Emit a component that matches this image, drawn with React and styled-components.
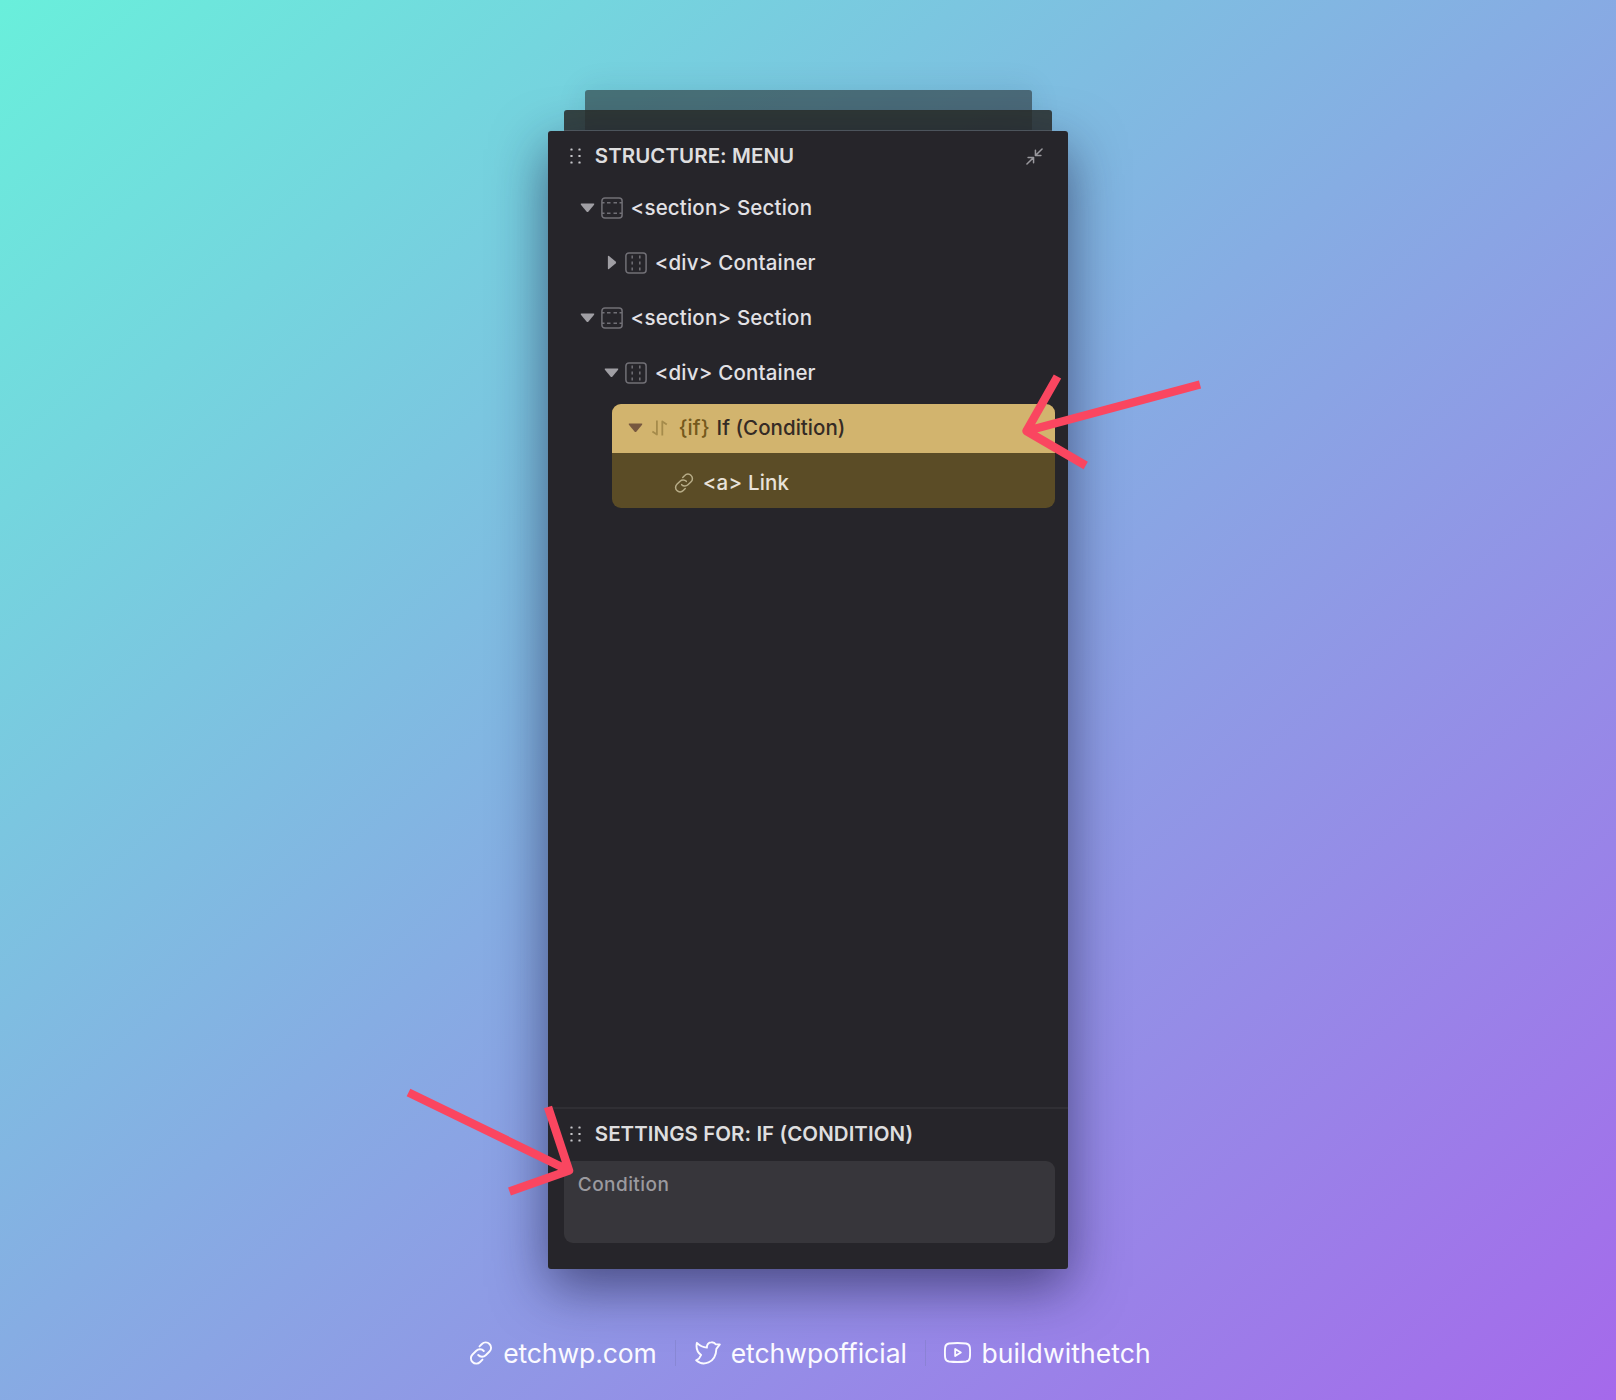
import React from 'react';
import styled, { createGlobalStyle } from 'styled-components';

const GlobalStyle = createGlobalStyle`
  * { box-sizing: border-box; }
  body { margin: 0; font-family: Inter, "Liberation Sans", sans-serif; }
  svg { display: block; flex: none; }
`;

const Page = styled.main`
  position: relative;
  display: flex;
  flex-direction: column;
  align-items: center;
  width: 1616px;
  height: 1400px;
  padding-top: 89.5px;
  overflow: hidden;
  background: linear-gradient(to bottom right, #69efdb 0%, #86ade3 48%, #a569eb 100%);
`;

const BackSheet = styled.div`
  width: 447px;
  height: 41.5px;
  margin-bottom: -21px;
  border-radius: 3px 3px 0 0;
  background: rgba(40, 48, 50, 0.6);
  box-shadow: 0 -2px 30px rgba(20, 50, 80, 0.1);
`;

const MiddleSheet = styled.div`
  width: 488.5px;
  height: 21px;
  border-radius: 3px 3px 0 0;
  border-bottom: 1px solid #50585b;
  background: rgba(42, 47, 44, 0.87);
`;

const Panel = styled.section`
  display: flex;
  flex-direction: column;
  width: 519.5px;
  height: 1137.5px;
  border-radius: 3px;
  background: #26252a;
  box-shadow: 0 18px 54px rgba(22, 22, 62, 0.6), 0 0 1px rgba(160, 180, 190, 0.8);
`;

const Heading = styled.header`
  display: flex;
  align-items: center;
  height: ${(p) => p.$height}px;
  padding: 1px 25px 0 21.5px;
`;

const Title = styled.h2`
  flex: 1;
  margin: 0 0 0 13px;
  font-size: 20.5px;
  font-weight: 600;
  line-height: 26px;
  letter-spacing: 0.06px;
  color: #dededf;
`;

const Tree = styled.div`
  display: flex;
  flex: 1;
  flex-direction: column;
`;

const Row = styled.div`
  display: flex;
  align-items: center;
  height: 55px;
  padding-left: ${(p) => 31.3 + p.$level * 24.1}px;
  color: #e2e1e5;
`;

const Caret = styled.span`
  display: flex;
  align-items: center;
  justify-content: center;
  width: 16px;
  margin-right: 5px;
  color: ${(p) => p.$color || '#a09fa4'};
`;

const RowIcon = styled.span`
  display: flex;
  align-items: center;
  justify-content: center;
  width: 22px;
  margin-right: 8px;
  color: ${(p) => p.$color || '#717076'};
`;

const Label = styled.span`
  font-size: 20.5px;
  font-weight: 500;
  line-height: 28px;
  letter-spacing: ${(p) => (p.$spacing === undefined ? 0.18 : p.$spacing)}px;
  white-space: pre;
`;

const Tag = styled.span`
  margin-right: 1.3px;
  color: ${(p) => p.$color || 'inherit'};
`;

const Selection = styled.div`
  margin: 4px 13px 0 63.5px;
  border-radius: 9px;
  overflow: hidden;
  background: #5b4c26;
`;

const SelectedRow = styled.div`
  display: flex;
  align-items: center;
  height: 48.5px;
  padding: 0 0 0.5px 15.8px;
  background: #d2b46e;
  color: #352b25;
`;

const LinkRow = styled.div`
  display: flex;
  align-items: center;
  height: 55px;
  padding: 6px 0 0 61px;
  color: #e8e2da;
`;

const Settings = styled.div`
  height: 162px;
  border-top: 2px solid #302f34;
`;

const Field = styled.div`
  height: 82px;
  margin: 2px 12.5px 0 15.5px;
  padding: 10px 14px;
  border-radius: 9px;
  background: #37363b;
`;

const FieldLabel = styled.span`
  font-size: 19px;
  font-weight: 500;
  line-height: 27px;
  letter-spacing: 0.45px;
  color: #9b9a9f;
`;

const Footer = styled.footer`
  display: flex;
  align-items: center;
  height: 40px;
  margin: 64px 0 0 4px;
  color: #fbfaff;
`;

const Social = styled.div`
  display: flex;
  align-items: center;
  gap: ${(p) => p.$gap}px;
  font-size: 26.5px;
  line-height: 34px;
  letter-spacing: ${(p) => p.$spacing}px;
`;

const Divider = styled.span`
  width: 1px;
  height: 26px;
  margin: 0 ${(p) => p.$after}px 0 ${(p) => p.$before}px;
  background: rgba(125, 125, 190, 0.45);
`;

const Arrows = styled.svg`
  position: absolute;
  inset: 0;
  pointer-events: none;
`;

const Grip = () => (
  <svg width="12" height="16" viewBox="0 0 12 16" fill="#c5c5c9">
    {[1.5, 8, 14.5].map((y) => [1.5, 9.5].map((x) => (
      <rect key={`${x}-${y}`} x={x - 1.1} y={y - 1.1} width="2.2" height="2.2" rx=".7" />
    )))}
  </svg>
);

const Collapse = () => (
  <svg width="17" height="17" viewBox="0 0 18 18" fill="none" stroke="#99989d" strokeWidth="1.6" strokeLinecap="round" strokeLinejoin="round">
    <path d="M17 1 10 8M10 2.5V8h5.8M1 17l7-7M2.2 10H8v5.5" />
  </svg>
);

const CaretDown = () => (
  <svg width="15" height="10" viewBox="0 0 15 10" fill="currentColor">
    <path d="M1.4.6h12.2q1.2.1.5 1.1L8.5 8.6q-1 1-2 0L.9 1.7Q.2.7 1.4.6Z" />
  </svg>
);

const CaretRight = () => (
  <svg width="10" height="15" viewBox="0 0 10 15" fill="currentColor">
    <path d="M.9 1.4v12.2q.1 1.2 1.1.5l6.6-5.6q1-1 0-2L2 .9Q1 .2.9 1.4Z" />
  </svg>
);

const SectionIcon = () => (
  <svg width="22" height="22" viewBox="0 0 22 22" fill="none" stroke="currentColor" strokeWidth="1.5">
    <rect x=".9" y=".9" width="20.2" height="20.2" rx="3" />
    <path d="M1 5.7h2.5M6 5.7h3.5M12.5 5.7H16M18.5 5.7H21M1 16.3h2.5M6 16.3h3.5M12.5 16.3H16M18.5 16.3H21" />
  </svg>
);

const ContainerIcon = () => (
  <svg width="22" height="22" viewBox="0 0 22 22" fill="none" stroke="currentColor" strokeWidth="1.5">
    <rect x=".9" y=".9" width="20.2" height="20.2" rx="3" />
    <path d="M7.2 3.6v2.8M7.2 9.6v2.8M7.2 15.6v2.8M14.8 3.6v2.8M14.8 9.6v2.8M14.8 15.6v2.8" />
  </svg>
);

const ConditionIcon = () => (
  <svg width="18" height="16" viewBox="0 0 18 16" fill="none" stroke="currentColor" strokeWidth="1.8" strokeLinejoin="round">
    <path d="M5.9.5v14L1.4 11.5M11.3 15.5v-14l4.5 3" />
  </svg>
);

const LinkIcon = ({ size, weight }) => (
  <svg width={size} height={size} viewBox="0 0 24 24" fill="none" stroke="currentColor" strokeWidth={weight} strokeLinecap="round" strokeLinejoin="round">
    <path d="M10.5 5.4 12.9 3a5.2 5.2 0 0 1 7.6 0 5.2 5.2 0 0 1 0 7.5l-3.8 3.7a5.2 5.2 0 0 1-7.5-.2" />
    <path d="M13.5 18.6 11.1 21a5.2 5.2 0 0 1-7.6 0 5.2 5.2 0 0 1 0-7.5l3.8-3.7a5.2 5.2 0 0 1 7.5.2" />
  </svg>
);

const BirdIcon = () => (
  <svg width="26" height="24" viewBox="0 0 26 24" fill="none" stroke="currentColor" strokeWidth="1.9" strokeLinecap="round" strokeLinejoin="round">
    <path d="M24.8 3.4h-3.9C19.8 1.7 18.3 1.1 16.5 1.2c-3 .1-4.8 2.4-4.6 5.4C7.6 6.3 4.6 4.5 1.9 1.8c-1 4.8-.2 9 4.2 12.2-1 2.8-2.5 4.2-4.9 5.3 3.2 3 8 3.9 12.3 2.1 5-2 7.6-6.4 7.9-13.6Z" />
  </svg>
);

const VideoIcon = () => (
  <svg width="27" height="21" viewBox="0 0 27 21" fill="none" stroke="currentColor" strokeWidth="1.9" strokeLinejoin="round">
    <path d="M5 1.5q8.5-1 17 0 3.4.5 3.8 3.6.6 5.4 0 10.8-.4 3.1-3.8 3.6-8.5 1-17 0-3.4-.5-3.8-3.6-.6-5.4 0-10.8.4-3.1 3.8-3.6Z" />
    <path d="M11.2 7v7l5.6-3.5Z" />
  </svg>
);

const TreeRow = ({ level, open, icon, tag, name }) => (
  <Row $level={level}>
    <Caret>{open ? <CaretDown /> : <CaretRight />}</Caret>
    <RowIcon>{icon}</RowIcon>
    <Label>{`<${tag}> ${name}`}</Label>
  </Row>
);

export default function App() {
  return (
    <Page>
      <GlobalStyle />
      <BackSheet />
      <MiddleSheet />
      <Panel>
        <Heading $height={49}>
          <Grip />
          <Title>STRUCTURE: MENU</Title>
          <Collapse />
        </Heading>
        <Tree>
          <TreeRow level={0} open icon={<SectionIcon />} tag="section" name="Section" />
          <TreeRow level={1} icon={<ContainerIcon />} tag="div" name="Container" />
          <TreeRow level={0} open icon={<SectionIcon />} tag="section" name="Section" />
          <TreeRow level={1} open icon={<ContainerIcon />} tag="div" name="Container" />
          <Selection>
            <SelectedRow>
              <Caret $color="#77583f"><CaretDown /></Caret>
              <RowIcon $color="#a58b4b"><ConditionIcon /></RowIcon>
              <Label $spacing={0.04}><Tag $color="#75591c">{'{if}'}</Tag> If (Condition)</Label>
            </SelectedRow>
            <LinkRow>
              <RowIcon $color="#b7ac87"><LinkIcon size={20} weight={1.8} /></RowIcon>
              <Label>{'<a> Link'}</Label>
            </LinkRow>
          </Selection>
        </Tree>
        <Settings>
          <Heading $height={50}>
            <Grip />
            <Title>SETTINGS FOR: IF (CONDITION)</Title>
          </Heading>
          <Field><FieldLabel>Condition</FieldLabel></Field>
        </Settings>
      </Panel>
      <Footer>
        <Social $spacing={-0.1} $gap={10}><LinkIcon size={24} weight={1.9} />etchwp.com</Social>
        <Divider $before={18.5} $after={18.5} />
        <Social $spacing={0} $gap={10}><BirdIcon />etchwpofficial</Social>
        <Divider $before={18.5} $after={17.5} />
        <Social $spacing={0.1} $gap={10.5}><VideoIcon />buildwithetch</Social>
      </Footer>
      <Arrows width="1616" height="1400" viewBox="0 0 1616 1400" fill="none" stroke="#fa4660" strokeWidth="8.5" strokeLinejoin="round">
        <path d="M1200 384.5 1026.5 431M1057.5 376.5 1026.5 431 1085.7 465.5" />
        <path d="M408.5 1092.5 569 1170.5M548 1107 569 1170.5 509.5 1191.5" />
      </Arrows>
    </Page>
  );
}
